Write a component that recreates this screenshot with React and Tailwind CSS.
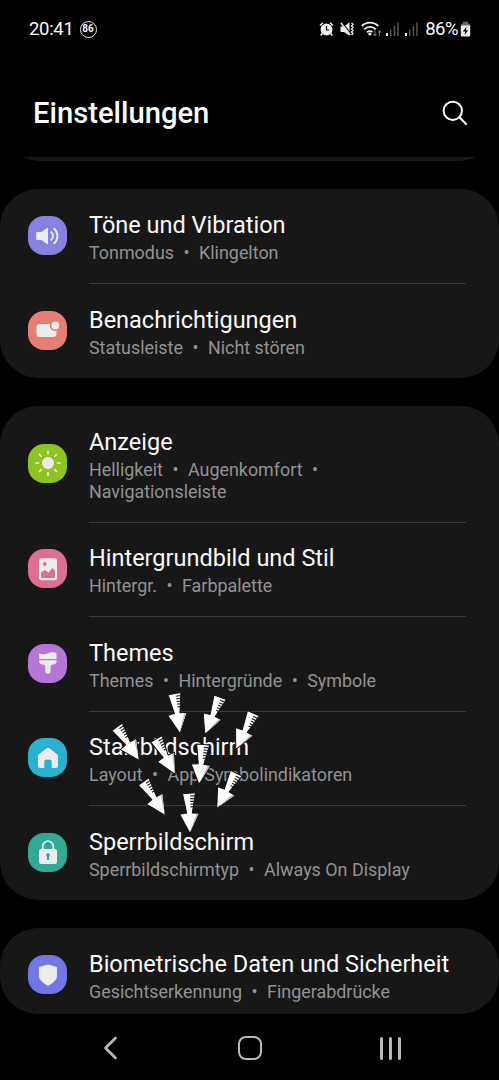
import clsx from "clsx";

const arrows = [
  { x: 180, y: 733, angle: -8 },
  { x: 205, y: 734, angle: 22.5 },
  { x: 236, y: 749, angle: 26 },
  { x: 139, y: 759.5, angle: -33.5 },
  { x: 174.5, y: 773.5, angle: -28 },
  { x: 198.5, y: 783.5, angle: 6 },
  { x: 165, y: 814.5, angle: -32.5 },
  { x: 189.5, y: 832.5, angle: -1.5 },
  { x: 216.5, y: 808, angle: 29 },
];

const groups = [
  [
    {
      title: "Töne und Vibration",
      lines: [["Tonmodus", "Klingelton"]],
      color: "bg-[#8781e0]",
      icon: <SoundIcon />,
    },
    {
      title: "Benachrichtigungen",
      lines: [["Statusleiste", "Nicht stören"]],
      color: "bg-[#e57e73]",
      icon: <NotificationIcon />,
    },
  ],
  [
    {
      title: "Anzeige",
      lines: [["Helligkeit", "Augenkomfort", ""], ["Navigationsleiste"]],
      color: "bg-[#8fc31f]",
      icon: <SunIcon />,
    },
    {
      title: "Hintergrundbild und Stil",
      lines: [["Hintergr.", "Farbpalette"]],
      color: "bg-[#dd6f91]",
      icon: <PictureIcon />,
    },
    {
      title: "Themes",
      lines: [["Themes", "Hintergründe", "Symbole"]],
      color: "bg-[#b676d5]",
      icon: <BrushIcon />,
    },
    {
      title: "Startbildschirm",
      lines: [["Layout", "App-Symbolindikatoren"]],
      color: "bg-[#2bb1d0]",
      icon: <HomeIcon />,
    },
    {
      title: "Sperrbildschirm",
      lines: [["Sperrbildschirmtyp", "Always On Display"]],
      color: "bg-[#31a995]",
      icon: <LockIcon />,
    },
  ],
  [
    {
      title: "Biometrische Daten und Sicherheit",
      lines: [["Gesichtserkennung", "Fingerabdrücke"]],
      color: "bg-[#7178e6]",
      icon: <ShieldIcon />,
    },
  ],
];

export default function App() {
  return (
    <div className="relative flex h-[1080px] w-[499px] flex-col overflow-hidden bg-black font-[Roboto,sans-serif] text-[#fafafa]">
      <StatusBar />

      <header className="flex h-[99px] shrink-0 items-center justify-between pl-[33px] pr-[31px] pt-[11px]">
        <h1 className="pt-[2px] text-[29.2px] font-medium leading-none">Einstellungen</h1>
        <svg width="26" height="26" viewBox="0 0 27 27" fill="none" stroke="#fafafa" strokeWidth="2.1" strokeLinecap="round">
          <circle cx="11.2" cy="11.2" r="9.5" />
          <path d="M18 18l7 7" />
        </svg>
      </header>

      {/* bottom edge of the card that is scrolled under the header */}
      <div className="flex h-[4px] shrink-0 items-end overflow-hidden px-[2px]">
        <div className="h-[80px] w-full shrink-0 rounded-[38px] bg-[#171717]" />
      </div>

      <main className="flex h-[853px] shrink-0 flex-col gap-[28px] overflow-hidden pt-[28px]">
        {groups.map((rows, i) => (
          <section
            key={i}
            className={clsx("shrink-0 overflow-hidden rounded-[38px] bg-[#171717]", i === 2 && "h-[86px]")}
          >
            {rows.map((row, j) => (
              <Row key={row.title} {...row} divider={j > 0} />
            ))}
          </section>
        ))}
      </main>

      <NavBar />

      {arrows.map((a) => (
        <Arrow key={`${a.x}-${a.y}`} {...a} />
      ))}
    </div>
  );
}

function Row({ title, lines, color, icon, divider }) {
  return (
    <div className="flex pl-[28px] pr-[33px]">
      <div className="flex w-[61px] shrink-0 items-center pb-px">
        <div className={clsx("flex size-[39px] items-center justify-center rounded-[16px]", color)}>
          {icon}
        </div>
      </div>
      <div
        className={clsx(
          "min-w-0 flex-1 border-t pb-[19.9px] pt-[20.1px]",
          divider ? "border-[#3a3a3a]" : "border-transparent"
        )}
      >
        <div className="mb-px whitespace-nowrap text-[23.5px] leading-[31px]">{title}</div>
        {lines.map((parts, i) => (
          <div key={i} className="whitespace-nowrap text-[17.9px] leading-[21.5px] text-[#929292]">
            {parts.map((part, j) => (
              <span key={j}>
                {j > 0 && <span className="mx-[9.5px]">•</span>}
                {part}
              </span>
            ))}
          </div>
        ))}
      </div>
    </div>
  );
}

function StatusBar() {
  return (
    <div className="flex h-[58px] shrink-0 items-center justify-between pl-[29px] pr-[28px]">
      <div className="flex items-center gap-[6px]">
        <span className="text-[18.5px] leading-none tracking-[-0.3px]">20:41</span>
        <div className="flex size-[17px] items-center justify-center rounded-full border-[1.5px] border-[#e8e8e8] text-[10px] font-bold leading-none">
          86
        </div>
      </div>

      <div className="flex items-center">
        <AlarmIcon />
        <MuteIcon />
        <WifiIcon />
        <SignalIcon />
        <SignalIcon />
        <span className="ml-[6px] text-[18.5px] leading-none tracking-[-0.5px]">86%</span>
        <BatteryIcon />
      </div>
    </div>
  );
}

function NavBar() {
  return (
    <nav className="flex h-[66px] shrink-0 items-center justify-between pl-[103px] pr-[98px] pt-[2px]">
      <svg width="17" height="24" viewBox="0 0 17 24" fill="none" stroke="#b9b9b9" strokeWidth="2.6" strokeLinecap="round" strokeLinejoin="round">
        <path d="M12.500 2L2.500 12l10 10" />
      </svg>
      <div className="size-[24px] rounded-[8px] border-[2.5px] border-[#b9b9b9]" />
      <div className="flex gap-[6px]">
        <span className="h-[23px] w-[3px] rounded-full bg-[#b9b9b9]" />
        <span className="h-[23px] w-[3px] rounded-full bg-[#b9b9b9]" />
        <span className="h-[23px] w-[3px] rounded-full bg-[#b9b9b9]" />
      </div>
    </nav>
  );
}

// x / y is the point the tip touches
function Arrow({ x, y, angle }) {
  return (
    <svg
      className="absolute overflow-visible"
      style={{ left: x - 12, top: y - 40 }}
      width="24"
      height="40"
      viewBox="0 0 24 40"
    >
      <g transform={`rotate(${angle} 12 40)`}>
        <path
          d="M5.500 .5L18.500 0L14.800 20L21.800 20.500L12 40.500L2.200 21L9.200 20Z"
          fill="#fff"
          stroke="#111"
          strokeWidth="1"
          strokeLinejoin="round"
        />
        <path d="M21 21L12.200 39L19 21Z" fill="#b5b5b5" />
        <path
          d="M13 3h5M13 5.700h4.600M13 8.400h4.100M13.200 11.100h3.400M13.200 13.800h2.800"
          stroke="#222"
          strokeWidth="1.200"
        />
      </g>
    </svg>
  );
}

function SoundIcon() {
  return (
    <svg width="25" height="22" viewBox="0 0 25 22" fill="none">
      <path d="M2 7h4.500L13 2.200v17.600L6.500 15H2a.8.8 0 0 1-.8-.8V7.800A.8.8 0 0 1 2 7z" fill="#ececf4" />
      <path d="M16.300 7.300a5 5 0 0 1 0 7.400M19.300 3.800a10 10 0 0 1 0 14.400" stroke="#ececf4" strokeWidth="1.900" strokeLinecap="round" />
    </svg>
  );
}

function NotificationIcon() {
  return (
    <svg width="25" height="22" viewBox="0 0 25 22">
      <rect x="1.500" y="5" width="20" height="13" rx="3.500" fill="#ececec" />
      <circle cx="20.300" cy="6.500" r="5.500" fill="#e57e73" />
      <circle cx="20.300" cy="6.500" r="3.900" fill="#ececec" />
    </svg>
  );
}

function SunIcon() {
  return (
    <svg width="28" height="28" viewBox="0 0 28 28" stroke="#ececec" strokeWidth="1.700" strokeLinecap="round">
      <circle cx="14" cy="14" r="6" fill="#ececec" stroke="none" />
      <path d="M14 2v2.500M14 23.500V26M2 14h2.500M23.500 14H26M5.500 5.500l1.800 1.800M20.700 20.700l1.800 1.800M5.500 22.500l1.800-1.800M20.700 7.300l1.800-1.800" />
    </svg>
  );
}

function PictureIcon() {
  return (
    <svg width="20" height="24" viewBox="0 0 20 24">
      <rect x="1" y="1.200" width="18" height="22" rx="2.500" fill="#ececec" />
      <circle cx="6.800" cy="7" r="1.900" fill="#dd6f91" />
      <path d="M3 15.500l3.500-2.500 4 2.500 4-4.500 2.500 2.500V20a1 1 0 0 1-1 1H4a1 1 0 0 1-1-1z" fill="#dd6f91" />
    </svg>
  );
}

function BrushIcon() {
  return (
    <svg width="20" height="24" viewBox="0 0 20 24" fill="#ececec">
      <path d="M1.200 2.500c3 1 5 1.200 8 0 3-1.300 6-1.500 8-.9q1.300.3 1.300 1.500V8H1.200z" />
      <path d="M1.200 9.300h17.300v1.400q0 2.300-2.400 2.600-3.300.3-3.500 2.200v4.500a2.700 2.700 0 0 1-5.400 0v-4.500q-.2-1.900-3.600-2.200-2.400-.3-2.400-2.600z" />
    </svg>
  );
}

function HomeIcon() {
  return (
    <svg width="22" height="22" viewBox="0 0 22 22" fill="#ececec">
      <path d="M9.600 1.300L1.800 7.500Q1 8.200 1 9.300V19a2 2 0 0 0 2 2h4.300v-6.500q0-1.700 1.700-1.700h4q1.700 0 1.700 1.700V21H19a2 2 0 0 0 2-2V9.300q0-1.100-.8-1.800l-7.800-6.200q-1.400-1.100-2.800 0z" />
    </svg>
  );
}

function LockIcon() {
  return (
    <svg width="20" height="26" viewBox="0 0 20 26">
      <path d="M4.700 12V7.300a5.300 5.300 0 0 1 10.600 0V12" fill="none" stroke="#ececec" strokeWidth="1.700" />
      <rect x="1" y="10" width="18" height="15" rx="2" fill="#ececec" />
      <path d="M10 14.300a1.900 1.900 0 0 0-1 3.500V21h2v-3.200a1.900 1.900 0 0 0-1-3.500z" fill="#31a995" />
    </svg>
  );
}

function ShieldIcon() {
  return (
    <svg width="20" height="22" viewBox="0 0 20 22" fill="#ececec">
      <path d="M10 .4l8 2.300q1 .3 1 1.300v7.500c0 4.500-4 7.800-9 10.100-5-2.300-9-5.600-9-10.100V4q0-1 1-1.300z" />
    </svg>
  );
}

function AlarmIcon() {
  return (
    <svg width="15" height="16" viewBox="0 0 15 16">
      <path d="M1 4.500L4 1.800M14 4.500L11 1.800" stroke="#eee" strokeWidth="1.500" />
      <path d="M3 12.500L1.800 14.500M12 12.500l1.200 2" stroke="#eee" strokeWidth="1.700" />
      <circle cx="7.500" cy="8.500" r="5.900" fill="#eee" />
      <path d="M7.500 5v4h2.800" stroke="#000" strokeWidth="1.200" fill="none" />
    </svg>
  );
}

function MuteIcon() {
  return (
    <svg className="ml-[6px]" width="15" height="16" viewBox="0 0 15 16">
      <path d="M.5 5.500H4L9.500 1.200v13.600L4 11H.5z" fill="#eee" />
      <path d="M1.800 1.500l9.500 12" stroke="#000" strokeWidth="1.300" />
      <path d="M.8 1.800l9.500 12" stroke="#eee" strokeWidth="1.400" />
      <path d="M11.500 2l1.500 1.500-1.500 1.500L13 6.500 11.500 8 13 9.500 11.500 11l1.500 1.500-1.500 1.500" stroke="#eee" strokeWidth="1.300" fill="none" />
    </svg>
  );
}

function WifiIcon() {
  return (
    <svg className="ml-[6px] mr-[-1px]" width="21" height="16" viewBox="0 0 21 16" fill="none">
      <path d="M.8 5a11.500 11.500 0 0 1 16.400 0M3.300 8.300a8 8 0 0 1 11.400 0M6 11.300a4.500 4.500 0 0 1 5.500-.3" stroke="#eee" strokeWidth="1.800" />
      <circle cx="8.800" cy="13" r="1.500" fill="#eee" />
      <path d="M14 9.500v5M12.500 13l1.500 1.700L15.500 13M18.500 15v-5M17 11.500l1.500-1.700 1.500 1.700" stroke="#777" strokeWidth="1.100" />
    </svg>
  );
}

function SignalIcon() {
  return (
    <svg className="ml-[4px]" width="15" height="16" viewBox="0 0 15 16">
      <rect x="1" y="12" width="2" height="3" fill="#eee" />
      <rect x="5" y="8.500" width="1.500" height="6.500" fill="#555" />
      <rect x="8.700" y="5" width="1.500" height="10" fill="#555" />
      <rect x="12.200" y="1.500" width="1.500" height="13.500" fill="#555" />
    </svg>
  );
}

function BatteryIcon() {
  return (
    <svg className="ml-[2px]" width="11" height="16" viewBox="0 0 11 16">
      <path d="M3 .8h5v2h2.200V5H.8V2.800H3z" fill="#666" />
      <rect x=".8" y="4.500" width="9.400" height="11" rx="1" fill="#eee" />
      <path d="M6.500 5.800L2.800 10.500h2.400L4.500 14l3.700-4.700H5.800z" fill="#000" />
    </svg>
  );
}
